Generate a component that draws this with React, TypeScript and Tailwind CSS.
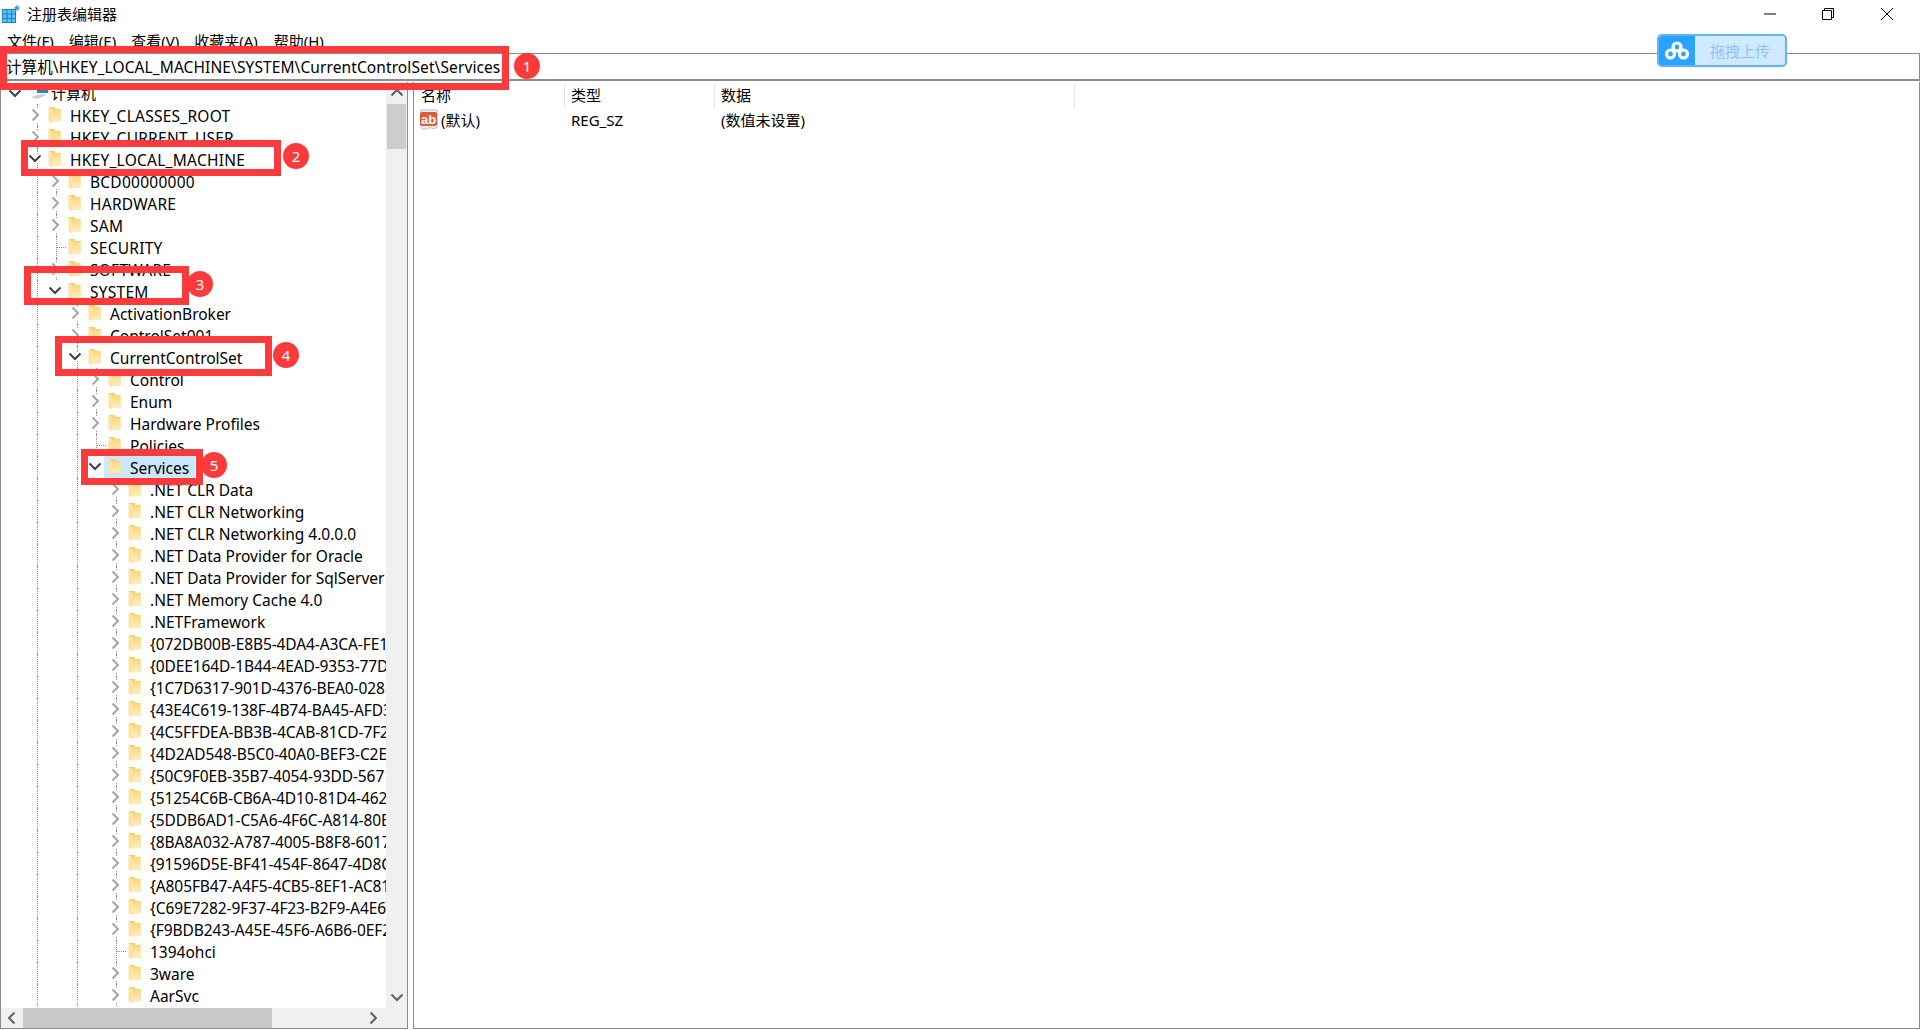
import { ChevronDown } from "lucide-react";

type Row = {
  label: string;
  level: number;
  state?: "open" | "closed" | "leaf";
  guides?: number[];
  selected?: boolean;
};

const L1 = [36];
const L2 = [36, 55];
const L3 = [36, 76];
const L4 = [36, 76, 95];
const L5 = [36, 76, 115];

const guids = [
  "{072DB00B-E8B5-4DA4-A3CA-FE1C",
  "{0DEE164D-1B44-4EAD-9353-77D1",
  "{1C7D6317-901D-4376-BEA0-028E",
  "{43E4C619-138F-4B74-BA45-AFD3",
  "{4C5FFDEA-BB3B-4CAB-81CD-7F2A",
  "{4D2AD548-B5C0-40A0-BEF3-C2E4",
  "{50C9F0EB-35B7-4054-93DD-5671",
  "{51254C6B-CB6A-4D10-81D4-4629",
  "{5DDB6AD1-C5A6-4F6C-A814-80B3",
  "{8BA8A032-A787-4005-B8F8-6017",
  "{91596D5E-BF41-454F-8647-4D8C",
  "{A805FB47-A4F5-4CB5-8EF1-AC81",
  "{C69E7282-9F37-4F23-B2F9-A4E6",
  "{F9BDB243-A45E-45F6-A6B6-0EF2",
];

const rows: Row[] = [
  { label: "计算机", level: 0, state: "open" },
  { label: "HKEY_CLASSES_ROOT", level: 1, guides: [36] },
  { label: "HKEY_CURRENT_USER", level: 1, guides: [36] },
  { label: "HKEY_LOCAL_MACHINE", level: 1, state: "open", guides: L1 },
  { label: "BCD00000000", level: 2, guides: L2 },
  { label: "HARDWARE", level: 2, guides: L2 },
  { label: "SAM", level: 2, guides: L2 },
  { label: "SECURITY", level: 2, state: "leaf", guides: L2 },
  { label: "SOFTWARE", level: 2, guides: L2 },
  { label: "SYSTEM", level: 2, state: "open", guides: L1 },
  { label: "ActivationBroker", level: 3, guides: L3 },
  { label: "ControlSet001", level: 3, guides: L3 },
  { label: "CurrentControlSet", level: 3, state: "open", guides: L3 },
  { label: "Control", level: 4, guides: L4 },
  { label: "Enum", level: 4, guides: L4 },
  { label: "Hardware Profiles", level: 4, guides: L4 },
  { label: "Policies", level: 4, state: "leaf", guides: L4 },
  { label: "Services", level: 4, state: "open", guides: L3, selected: true },
  { label: ".NET CLR Data", level: 5, guides: L5 },
  { label: ".NET CLR Networking", level: 5, guides: L5 },
  { label: ".NET CLR Networking 4.0.0.0", level: 5, guides: L5 },
  { label: ".NET Data Provider for Oracle", level: 5, guides: L5 },
  { label: ".NET Data Provider for SqlServer", level: 5, guides: L5 },
  { label: ".NET Memory Cache 4.0", level: 5, guides: L5 },
  { label: ".NETFramework", level: 5, guides: L5 },
  ...guids.map((label) => ({ label, level: 5, guides: L5 })),
  { label: "1394ohci", level: 5, state: "leaf", guides: L5 },
  { label: "3ware", level: 5, guides: L5 },
  { label: "AarSvc", level: 5, guides: L5 },
];

function Folder() {
  return (
    <svg width="13" height="18" viewBox="0 0 13 18" className="shrink-0">
      <defs>
        <linearGradient id="folderFace" x1="0" y1="0" x2="0" y2="1">
          <stop offset="0" stopColor="#f9d97e" />
          <stop offset="1" stopColor="#feedbd" />
        </linearGradient>
      </defs>
      <path d="M1 1h5.500l1 2h5v12.500H1z" fill="#f5cf6c" />
      <path d="M4 3.500h8.500V15H4z" fill="url(#folderFace)" />
      <path d="M.5 1L4 3v14.500L.5 15z" fill="#fde39f" />
    </svg>
  );
}

function ChevronClosed({ color = "#a6a6a6" }: { color?: string }) {
  return (
    <svg width="9" height="14" viewBox="0 0 9 14" fill="none" stroke={color} strokeWidth="2">
      <path d="M1.500 1.500L7 7l-5.500 5.500" />
    </svg>
  );
}

function ChevronOpen({ color = "#404040" }: { color?: string }) {
  return (
    <svg width="14" height="9" viewBox="0 0 14 9" fill="none" stroke={color} strokeWidth="2">
      <path d="M1.500 1.500L7 7l5.500-5.500" />
    </svg>
  );
}

function TreeRow({ row }: { row: Row }) {
  const offset = (row.level - 1) * 20;
  const state = row.state ?? "closed";
  const isGuid = row.label.startsWith("{");
  const isUpper = row.label === row.label.toUpperCase() && !isGuid;
  return (
    <div className="relative h-[22px] shrink-0 whitespace-nowrap">
      {row.guides?.map((x) => (
        <span
          key={x}
          className="absolute top-0 h-[22px] border-l border-dotted border-[#8a8a8a]"
          style={{ left: x }}
        />
      ))}
      {row.level === 0 ? (
        <div className="absolute inset-0 flex items-center bg-white">
          <span className="ml-[7px]">
            <ChevronOpen />
          </span>
          <svg width="20" height="18" viewBox="0 0 20 18" className="ml-[7px] -mt-[3px]">
            <path d="M8 1h11v9H8z" fill="#2b7fd4" />
            <path d="M2 14l10-3 6 1-10 4z" fill="#c9ced4" />
          </svg>
          <span className="ml-[2px] text-[15px]">{row.label}</span>
        </div>
      ) : (
        <div
          className={`absolute top-0 h-[22px] flex items-center ${row.selected ? "bg-[#cce8ff] pl-[4px] pr-[6px]" : "bg-white"}`}
          style={{ left: row.selected ? 43 + offset : 47 + offset }}
        >
          <Folder />
          <span className={`ml-[9px] pt-px ${isUpper ? "tracking-[0.25px]" : ""} ${isGuid ? "tracking-[-0.1px]" : ""}`}>
            {row.label}
          </span>
        </div>
      )}
      {row.level > 0 && state === "leaf" && (
        <span
          className="absolute top-[11px] w-[9px] border-t border-dotted border-[#8a8a8a]"
          style={{ left: 36 + offset }}
        />
      )}
      {row.level > 0 && state === "closed" && (
        <span className="absolute top-[4px] flex bg-white" style={{ left: 30 + offset }}>
          <ChevronClosed />
        </span>
      )}
      {row.level > 0 && state === "open" && (
        <span className="absolute top-[6px] flex bg-white" style={{ left: 27 + offset }}>
          <ChevronOpen />
        </span>
      )}
    </div>
  );
}

// red annotation frame drawn over the screenshot
function Mark({ n, box, dot }: { n: number; box: string; dot: string }) {
  return (
    <>
      <div className={`absolute border-[7px] border-[#fb3b3b] ${box}`} />
      <div
        className={`absolute w-[26px] h-[26px] rounded-full bg-[#fb3b3b] text-white text-[15px] flex items-center justify-center ${dot}`}
      >
        {n}
      </div>
    </>
  );
}

export default function App() {
  return (
    <div className="relative w-[1920px] h-[1030px] overflow-hidden bg-white text-black text-[15px] leading-[22px] font-['Noto_Sans','Noto_Sans_CJK_SC',sans-serif]">
      {/* Title bar */}
      <div className="h-[28px] flex items-center">
        <svg width="18" height="18" viewBox="0 0 18 18" className="ml-[2px]">
          <path d="M0 4h14v14H0z" fill="#1683c8" />
          <path
            d="M1 5h3.500v3.500H1zM5.500 5H9v3.500H5.500zM10 5h3v3.500h-3zM1 9.500h3.500V13H1zM5.500 9.500H9V13H5.500zM10 9.500h3V13h-3zM1 14h3.500v3H1zM5.500 14H9v3H5.500zM10 14h3v3h-3z"
            fill="#5cc1ee"
          />
          <path d="M15 0l3 3-3 3-3-3z" fill="#48a5dc" />
        </svg>
        <span className="ml-[7px]">注册表编辑器</span>
        <div className="ml-auto flex items-center mr-[26px] gap-[46px]">
          <svg width="12" height="12" viewBox="0 0 12 12">
            <path d="M0 6h12" stroke="#000" strokeWidth="1" />
          </svg>
          <svg width="12" height="12" viewBox="0 0 12 12" fill="none" stroke="#000">
            <path d="M.5 2.500h9v9h-9zM2.500 2.500v-2h9v9h-2" />
          </svg>
          <svg width="14" height="14" viewBox="0 0 14 14" fill="none" stroke="#000">
            <path d="M1 1l12 12M13 1L1 13" />
          </svg>
        </div>
      </div>

      {/* Menu */}
      <div className="h-[25px] flex items-center pl-[7px] gap-[15px]">
        <span>文件(F)</span>
        <span>编辑(E)</span>
        <span>查看(V)</span>
        <span>收藏夹(A)</span>
        <span className="ml-[1px]">帮助(H)</span>
      </div>

      {/* Address bar */}
      <div className="h-[28px] border-t border-b-2 border-r border-[#8c8c8c] pl-[6px] flex items-center text-[15.5px] tracking-[0.1px]">
        计算机\HKEY_LOCAL_MACHINE\SYSTEM\CurrentControlSet\Services
      </div>

      <div className="h-[949px] pt-px pb-px flex gap-[5px] text-[15.5px]">
        {/* Tree */}
        <div className="w-[408px] flex flex-col border-x border-b border-[#8c8c8c]">
          <div className="h-[926px] flex">
            <div className="w-[385px] overflow-hidden flex flex-col">
              {rows.map((row) => (
                <TreeRow key={row.label} row={row} />
              ))}
            </div>
            <div className="w-[21px] bg-[#f0f0f0] flex flex-col items-center justify-between py-[6px]">
              <span className="flex rotate-180">
                <ChevronOpen color="#606060" />
              </span>
              <div className="absolute top-[104px] h-[45px] w-[19px] bg-[#cdcdcd]" />
              <span className="flex">
                <ChevronOpen color="#606060" />
              </span>
            </div>
          </div>
          <div className="h-[20px] flex items-center bg-[#f0f0f0]">
            <div className="w-[22px] flex justify-center rotate-180">
              <ChevronClosed color="#606060" />
            </div>
            <div className="w-[249px] h-full bg-[#c8c8c8]" />
            <div className="ml-auto w-[44px] pr-[24px] flex justify-center">
              <ChevronClosed color="#606060" />
            </div>
          </div>
        </div>

        {/* Values list */}
        <div className="flex-1 border-l border-b border-r border-[#8c8c8c] pt-px text-[15px]">
          <div className="h-[25px] flex items-center">
            <div className="w-[151px] h-[24px] pl-[7px] border-r border-[#e5e5e5]">名称</div>
            <div className="w-[150px] h-[24px] pl-[6px] border-r border-[#e5e5e5]">类型</div>
            <div className="w-[360px] h-[24px] pl-[6px] border-r border-[#e5e5e5]">数据</div>
          </div>
          <div className="h-[22px] flex items-center pt-px">
            <div className="w-[151px] pl-[5px] flex items-center">
              <svg width="20" height="22" viewBox="0 0 20 22" className="shrink-0">
                <path d="M2 1h16v17c-3 3-5 0-8 1s-5 2-8 0z" fill="#f4f1ee" stroke="#bdbdbd" />
                <rect x="1" y="3" width="17" height="14" rx="2" fill="#e35a38" />
                <text x="2" y="14.500" fontSize="13" fontWeight="700" fill="#fff" fontFamily="Liberation Sans">
                  ab
                </text>
              </svg>
              <span className="ml-[2px]">(默认)</span>
            </div>
            <div className="w-[150px] pl-[6px]">REG_SZ</div>
            <div className="pl-[6px]">(数值未设置)</div>
          </div>
        </div>
      </div>

      {/* Upload widget */}
      <div className="absolute left-[1657px] top-[34px] w-[130px] h-[33px] rounded-[5px] border-2 border-[#5fb3ff] bg-[#cfeaff] flex overflow-hidden text-[#8cc4f5] text-[15px]">
        <div className="w-[36px] bg-[#29a3ff] flex items-center justify-center">
          <svg width="26" height="20" viewBox="0 0 26 20" fill="none" stroke="#fff" strokeWidth="3.2">
            <circle cx="13" cy="6" r="4" />
            <circle cx="6.500" cy="13" r="4" />
            <circle cx="19.500" cy="13" r="4" />
          </svg>
        </div>
        <div className="flex-1 flex items-center justify-center">拖拽上传</div>
      </div>

      <Mark n={1} box="left-0 top-[46px] w-[509px] h-[44px]" dot="left-[514px] top-[53px]" />
      <Mark n={2} box="left-[21px] top-[140px] w-[260px] h-[36px]" dot="left-[283px] top-[143px]" />
      <Mark n={3} box="left-[24px] top-[266px] w-[165px] h-[39px]" dot="left-[187px] top-[271px]" />
      <Mark n={4} box="left-[55px] top-[336px] w-[217px] h-[40px]" dot="left-[273px] top-[342px]" />
      <Mark n={5} box="left-[81px] top-[449px] w-[122px] h-[36px]" dot="left-[201px] top-[452px]" />
    </div>
  );
}
